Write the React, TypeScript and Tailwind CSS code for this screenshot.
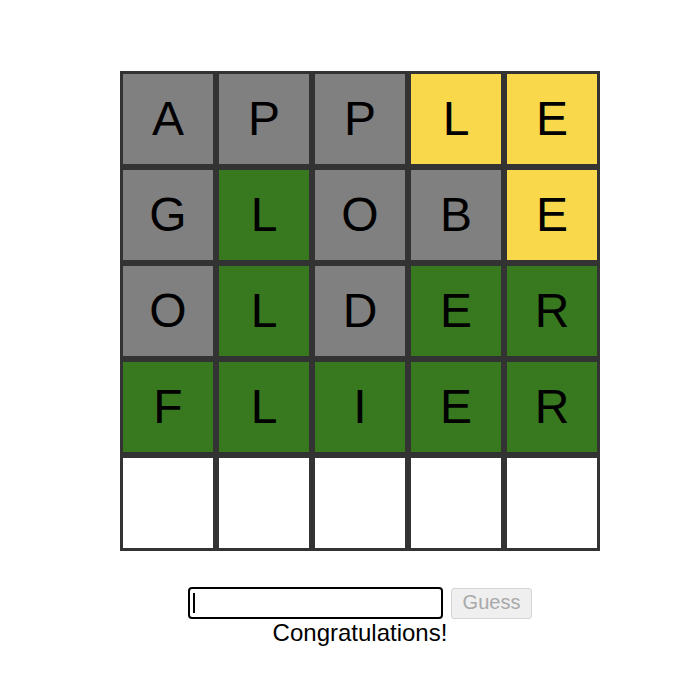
import { useState } from "react";

type Mark = "gray" | "green" | "yellow" | "empty";

const ROWS: { letters: string; marks: Mark[] }[] = [
    { letters: "APPLE", marks: ["gray", "gray", "gray", "yellow", "yellow"] },
    { letters: "GLOBE", marks: ["gray", "green", "gray", "gray", "yellow"] },
    { letters: "OLDER", marks: ["gray", "green", "gray", "green", "green"] },
    { letters: "FLIER", marks: ["green", "green", "green", "green", "green"] },
    { letters: "     ", marks: ["empty", "empty", "empty", "empty", "empty"] },
];

const TILE_BG: Record<Mark, string> = {
    gray: "bg-[#808080]",
    green: "bg-[#38791f]",
    yellow: "bg-[#fad84c]",
    empty: "bg-white",
};

function Tile({ letter, mark }: { letter: string; mark: Mark }) {
    return (
        <div className={`w-[96px] h-[96px] border-[3px] border-[#333333] flex items-center justify-center text-[48px] leading-none text-black ${TILE_BG[mark]}`}>
            {letter.trim()}
        </div>
    );
}

export default function App() {
    const [guess, setGuess] = useState("");

    return (
        <div className="w-full min-h-[690px] bg-white overflow-hidden font-['Liberation_Sans',Arial,sans-serif]">
            <div className="w-[720px] pt-[71px] flex flex-col items-center">
                <div className="grid grid-cols-5 w-[480px]">
                    {ROWS.map((row, r) =>
                        row.marks.map((mark, c) => (
                            <Tile key={`${r}-${c}`} letter={row.letters[c]} mark={mark} />
                        ))
                    )}
                </div>

                <div className="mt-[36px] flex items-center gap-[8px]">
                    <div className="relative">
                        <input
                            autoFocus
                            value={guess}
                            onChange={(e) => setGuess(e.target.value)}
                            className="w-[255px] h-[32px] border-2 border-black rounded-[4px] px-[4px] text-[20px] text-black outline-none caret-transparent"
                        />
                        {guess === "" && (
                            <span className="absolute left-[5px] top-[6px] w-[2px] h-[20px] bg-black pointer-events-none" />
                        )}
                    </div>
                    <button
                        disabled
                        className="h-[31px] px-[11px] pb-[2px] border border-[#d4d4d4] rounded-[3px] bg-[#efefef] text-[20px] leading-none text-[#a9a9a9]"
                    >
                        Guess
                    </button>
                </div>
                <div className="text-[24px] leading-[1.15] text-black">Congratulations!</div>
            </div>
        </div>
    );
}
